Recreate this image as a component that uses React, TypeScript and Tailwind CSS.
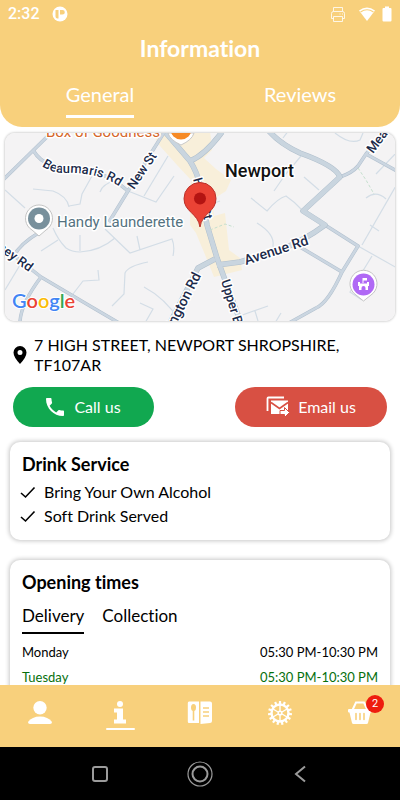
import { useState } from "react";
import type { ReactNode } from "react";

const MAJOR_ROADS = [
  "M166 133 L190 161 Q197 172 200 185 L207 225 L217 258 L225 280 L241 323",
  "M190 161 Q205 155 222 132",
  "M268 130 Q280 144 300 153 Q336 166 340 177 L303 211 L325 225 Q305 240 280 250 L240 262 L217 265",
  "M215 259 L198 268 L170 323",
];

const MID_ROADS = [
  "M3 180 L53 131",
  "M33 150 Q40 162 52 165 L95 172 Q112 177 128 191",
  "M165 131 L153 150 L128 191 L109 222",
  "M3 247 L41 277 L90 306 L119 323",
  "M41 277 Q20 305 20 323",
  "M40 232 Q18 245 13 258",
  "M340 177 Q352 173 358 166 L366 154 L386 131",
  "M366 154 L397 171",
  "M325 225 L358 246 L342 272 Q328 303 316 308 L289 323",
  "M300 247 L342 272",
];

const MINOR_ROADS = [
  "M358 246 L397 268",
  "M33 189 L53 191 Q67 196 69 207 M53 228 Q58 240 66 248 Q72 252 80 252 Q100 251 115 238",
  "M69 206 L80 204 L82 194 L92 176",
  "M128 191 L156 202 L174 176",
  "M144 196 L168 156",
  "M117 180 Q102 184 100 192",
  "M105 229 L130 253 L172 239 Q175 246 173 256",
  "M148 262 Q128 266 125 273 L124 294 L112 306",
  "M98 270 L99 280 L83 281 L73 294",
  "M144 287 Q165 298 180 321",
  "M5 290 L20 265",
  "M80 235 V251",
  "M41 251 L58 240",
  "M5 190 L25 208",
  "M251 198 L267 211 Q278 198 286 196 Q295 202 303 211",
  "M257 223 Q275 234 273 246 L277 255",
  "M301 156 L285 175 L274 191",
  "M304 177 L319 190",
  "M283 138 L292 126",
  "M335 133 Q350 145 360 140 L363 133",
  "M397 184 L362 245",
  "M366 198 Q376 190 386 199",
  "M370 225 L379 231",
  "M397 152 L376 174",
  "M372 256 L350 292 L362 300",
  "M234 318 L268 306 M255 311 L258 321",
  "M275 323 L281 313",
  "M137 236 L140 250",
  "M200 208 L220 201",
  "M140 303 L153 309 L145 323",
];

const OPENING_HOURS = [
  { day: "Monday", hours: "05:30 PM-10:30 PM", today: false },
  { day: "Tuesday", hours: "05:30 PM-10:30 PM", today: true },
];

const GEAR_TEETH = [0, 24, 48, 72, 96, 120, 144, 168, 192, 216, 240, 264, 288, 312, 336];

function Roads({ paths, edge, fill, width }: { paths: string[]; edge: string; fill: string; width: number }) {
  return (
    <g fill="none" strokeLinejoin="round">
      {paths.map((d) => <path key={d} d={d} stroke={edge} strokeWidth={width + 1} />)}
      {paths.map((d) => <path key={d + "f"} d={d} stroke={fill} strokeWidth={width} />)}
    </g>
  );
}

function TownMap() {
  return (
    <svg viewBox="5 133 390 188" preserveAspectRatio="xMidYMid slice" className="block h-[188px] w-full" role="img" aria-label="Map of Newport">
      <rect x="0" y="125" width="400" height="200" fill="#f4f3f4" />
      <path d="M150 130 H210 L212 150 L204 158 L216 169 L231 180 L226 191 L212 200 L214 216 L225 213 L229 250 L240 258 L242 270 L214 277 L208 262 L196 233 L190 225 L191 180 L177 165 L160 146 Z" fill="#f8efda" />
      <g fill="none" stroke="#d3dde6" strokeWidth="1.200">
        {MINOR_ROADS.map((d) => <path key={d} d={d} />)}
      </g>
      <Roads paths={MID_ROADS} edge="#b2c0ce" fill="#cbd6e1" width={2.5} />
      <Roads paths={MAJOR_ROADS} edge="#b0bfcc" fill="#c9d5df" width={4.5} />
      <path d="M210 230 L225 224 L234 227 M358 168 L366 180 L374 194" fill="none" stroke="#c5dfce" strokeDasharray="3 2" />

      <defs>
        <path id="beaumaris" d="M42 166 Q53 174 70 173 Q100 173 120 187" />
        <path id="neyrd" d="M-3 249 L33 275" />
      </defs>
      <g fontFamily="Roboto, sans-serif" fill="#1b2a4a" stroke="#ffffff" strokeWidth="3" strokeLinejoin="round" paintOrder="stroke" fontWeight="500">
        <text fontSize="13"><textPath href="#beaumaris">Beaumaris Rd</textPath></text>
        <text fontSize="13" transform="translate(134 190) rotate(-56)">New St</text>
        <text fontSize="13"><textPath href="#neyrd">ney Rd</textPath></text>
        <text fontSize="14" transform="translate(246 265) rotate(-18)">Avenue Rd</text>
        <text fontSize="13" transform="translate(373 154) rotate(-53)">Meadow</text>
        <text fontSize="13" transform="translate(221 281) rotate(73)">Upper Bar</text>
        <text fontSize="14" transform="translate(171 335) rotate(-63)">llington Rd</text>
        <text fontSize="13" transform="translate(193 179) rotate(75)">High St</text>
        <text x="225" y="177" fontSize="18" fill="#111111">Newport</text>
        <text x="57" y="227" fontSize="15" fill="#54727f" fontWeight="400">Handy Launderette</text>
        <text x="46" y="137" fontSize="15" fill="#d5662a" fontWeight="400">Box of Goodness</text>
      </g>

      <g>
        <path d="M168 133 Q170 140 181 145 Q192 140 194 133 Z" fill="#ffffff" stroke="#c8c8c8" />
        <circle cx="181" cy="129" r="10.500" fill="#f68a26" />
      </g>
      <g>
        <path d="M39 236 L32 230 A13.500 13.500 0 1 1 46 230 Z" fill="#ffffff" stroke="#c4c4c4" />
        <circle cx="39" cy="218.500" r="11" fill="#78909c" />
        <circle cx="39" cy="218.500" r="4.500" fill="#ffffff" />
      </g>
      <g>
        <path d="M363.500 301 L356 295 A13.500 13.500 0 1 1 371 295 Z" fill="#ffffff" stroke="#c4c4c4" />
        <circle cx="363.500" cy="284.500" r="11" fill="#b069f5" />
        <path d="M362.500 278 H367 V280.500 H363.500 V283 H362.500 Z M358 282 H360 V283.500 H367 V282 H369 V286 H368 V290 H365.500 V288 A2 2 0 0 0 361.500 288 V290 H359 V286 H358 Z" fill="#ffffff" />
      </g>
      <path d="M200 227 C198 213 184 212 184 198.500 A16 16 0 0 1 216 198.500 C216 212 202 213 200 227 Z" fill="#ea4335" stroke="#b9312a" />
      <circle cx="200" cy="198.500" r="6" fill="#b31412" />

      <text x="12" y="308" fontFamily="Lato, sans-serif" fontSize="20" fontWeight="600" stroke="#ffffff" strokeWidth="2" paintOrder="stroke">
        <tspan fill="#4285f4">G</tspan><tspan fill="#ea4335">o</tspan><tspan fill="#fbbc05">o</tspan><tspan fill="#4285f4">g</tspan><tspan fill="#34a853">l</tspan><tspan fill="#ea4335">e</tspan>
      </text>
    </svg>
  );
}

function StatusBar() {
  return (
    <div className="flex h-7 items-center px-2 text-white">
      <span className="w-11 font-[Roboto] text-base font-medium">2:32</span>
      <svg width="16" height="16" viewBox="0 0 16 16">
        <circle cx="8" cy="8" r="7.500" fill="#fff" />
        <path d="M3.500 4 H6.500 V12.500 H5.500 Q3.500 12.500 3.500 10.500 Z M8 4 H10.500 A2.300 2.300 0 0 1 10.500 8.600 H8 Z" fill="#f8d07c" />
      </svg>
      <svg className="ml-auto" width="16" height="16" viewBox="0 0 16 16" fill="none" stroke="#fff" strokeOpacity=".8">
        <path d="M3.500 5.500 V1.500 H12.500 V5.500 M3.500 12.500 H1.500 V7.500 Q1.500 5.500 3.500 5.500 H12.500 Q14.500 5.500 14.500 7.500 V12.500 H12.500 M3.500 10.500 H12.500 V15.500 H3.500 Z M9.500 8 H10.500 M12 8 H13" />
      </svg>
      <svg className="ml-3" width="18" height="16" viewBox="0 0 18 16">
        <path d="M1 4.500 Q9 -1.500 17 4.500 L9 15 Z" fill="#fff" />
        <path d="M2.500 6 Q9 1.500 15.500 6" fill="none" stroke="#f8d07c" strokeWidth="1.200" />
      </svg>
      <svg className="ml-1.5" width="10" height="16" viewBox="0 0 10 16">
        <path d="M3 .5 H7 V2 H8.500 Q9.500 2 9.500 3 V14.500 Q9.500 15.500 8.500 15.500 H1.500 Q.5 15.500 .5 14.500 V3 Q.5 2 1.500 2 H3 Z" fill="#fff" />
      </svg>
    </div>
  );
}

function Card({ title, children }: { title: string; children: ReactNode }) {
  return (
    <section className="mx-2.5 rounded-[10px] bg-white px-3 pt-2.5 pb-3 shadow-[0_0_4px_1px_rgba(0,0,0,0.22)]">
      <h2 className="text-lg leading-6 font-bold">{title}</h2>
      {children}
    </section>
  );
}

function Tick({ children }: { children: string }) {
  return (
    <li className="flex items-center gap-2">
      <svg className="-ml-0.5" width="16" height="14" viewBox="0 0 16 14" fill="none" stroke="#000" strokeWidth="1.600">
        <path d="M1 8 L5.500 12 L14.500 2.500" />
      </svg>
      {children}
    </li>
  );
}

function BottomNav() {
  return (
    <nav className="grid h-[62px] shrink-0 grid-cols-5 bg-[#f8d07c]">
      <button aria-label="Account" className="flex flex-col items-center pt-4">
        <svg width="24" height="24" viewBox="0 0 24 24" fill="#fff">
          <circle cx="12" cy="6.700" r="6.700" />
          <path d="M0 21 Q4 15.500 12 15.500 Q20 15.500 24 21 Q24 23 22 23 H2 Q0 23 0 21 Z" />
        </svg>
      </button>
      <button aria-label="Information" className="flex flex-col items-center pt-4">
        <svg width="24" height="24" viewBox="0 0 24 24" fill="#fff">
          <circle cx="12" cy="3" r="3" />
          <path d="M6 7.500 H15 V18.500 H18 V22.500 H6 V18.500 H9 V11.500 H6 Z" />
        </svg>
        <span className="mt-[3px] h-0.5 w-[29px] rounded-full bg-white" />
      </button>
      <button aria-label="Menu" className="flex flex-col items-center pt-4">
        <svg width="26" height="24" viewBox="0 0 26 24">
          <path d="M2 .5 H12 V22 H2 Q.8 22 .8 20.500 V2 Q.8 .5 2 .5 Z M13.500 .5 H23 Q25 .5 25 2.500 V20 Q25 22 23 22 L13.500 23 Z" fill="#fff" />
          <ellipse cx="6.500" cy="6.500" rx="2.500" ry="3.500" fill="#f8d07c" />
          <path d="M6.500 9 V19.500 M16 7 H22 M16 11 H22 M16 15 H22" stroke="#f8d07c" strokeWidth="1.600" />
        </svg>
      </button>
      <button aria-label="Settings" className="flex flex-col items-center pt-4">
        <svg width="24" height="24" viewBox="0 0 24 24" fill="none" stroke="#fff">
          {GEAR_TEETH.map((angle) => (
            <path key={angle} d="M12 0 V4" strokeWidth="2.200" transform={`rotate(${angle} 12 12)`} />
          ))}
          <circle cx="12" cy="12" r="8.500" strokeWidth="2.400" />
          <circle cx="12" cy="12" r="1.800" strokeWidth="1.600" />
          <path d="M12 4 V10 M12 14 V20 M5 8 L10 11 M14 13 L19 16 M5 16 L10 13 M14 11 L19 8" strokeWidth="1.400" />
        </svg>
      </button>
      <button aria-label="Basket, 2 items" className="flex flex-col items-center pt-4">
        <span className="relative">
          <svg width="24" height="24" viewBox="0 0 24 24">
            <path d="M4.500 9 L8 1.500 H16 L19.500 9" fill="none" stroke="#fff" strokeWidth="2" />
            <path d="M1 8 H23 Q24 8 24 9 V10.500 Q24 11.500 23 11.500 H22.500 L20 22 Q19.700 23 18.500 23 H5.500 Q4.300 23 4 22 L1.500 11.500 H1 Q0 11.500 0 10.500 V9 Q0 8 1 8 Z" fill="#fff" />
            <path d="M8 12.500 V18.500 M12 12.500 V18.500 M16 12.500 V18.500" stroke="#f8d07c" strokeWidth="1.600" strokeLinecap="round" />
          </svg>
          <span className="absolute -top-1.5 -right-3 flex size-[18px] items-center justify-center rounded-full bg-[#ee1c0e] font-[Roboto] text-[11px] leading-3 text-white">2</span>
        </span>
      </button>
    </nav>
  );
}

function SystemNav() {
  return (
    <div className="grid h-[53px] shrink-0 grid-cols-[1fr_100px_100px_100px_1fr] place-items-center bg-black text-[#9b9b9b]">
      <button aria-label="Recent apps" className="col-start-2">
        <svg width="16" height="16" viewBox="0 0 16 16" fill="none" stroke="currentColor" strokeWidth="2">
          <rect x="1" y="1" width="14" height="14" rx="2" />
        </svg>
      </button>
      <button aria-label="Home">
        <svg width="26" height="26" viewBox="0 0 26 26" fill="none" stroke="currentColor">
          <circle cx="13" cy="13" r="12" strokeWidth="1.200" />
          <circle cx="13" cy="13" r="7.500" strokeWidth="2" />
        </svg>
      </button>
      <button aria-label="Back">
        <svg width="12" height="18" viewBox="0 0 12 18" fill="none" stroke="currentColor" strokeWidth="2">
          <path d="M11 1.500 L2 9 L11 16.500" />
        </svg>
      </button>
    </div>
  );
}

export default function App() {
  const [tab, setTab] = useState("General");
  const [service, setService] = useState("Delivery");

  return (
    <div className="flex h-screen flex-col overflow-hidden bg-white font-[Lato,sans-serif] text-black [font-variant-ligatures:none]">
      <header className="shrink-0 rounded-b-[22px] bg-[#f8d07c] pb-[9px] text-white">
        <StatusBar />
        <h1 className="pt-1 text-center text-[23px] leading-8 font-bold">Information</h1>
        <div className="grid grid-cols-2 justify-items-center pt-[18px] text-xl">
          {["General", "Reviews"].map((name) => (
            <button
              key={name}
              onClick={() => setTab(name)}
              className={`border-b-3 pb-[9px] leading-6 ${tab === name ? "border-white" : "border-transparent"}`}
            >
              {name}
            </button>
          ))}
        </div>
      </header>

      <main className="min-h-0 flex-1 overflow-hidden">
        <div className="mx-[5px] mt-1.5 overflow-hidden rounded-[10px] shadow-[0_0_2px_1px_rgba(0,0,0,0.15)]">
          <TownMap />
        </div>

        <div className="flex items-center px-3 pt-3.5">
          <svg className="shrink-0" width="16" height="20" viewBox="0 0 16 20">
            <path d="M8 1 A6.500 6.500 0 0 1 14.500 7.500 Q14.500 12 8 19 Q1.500 12 1.500 7.500 A6.500 6.500 0 0 1 8 1 Z M8 5 A2.500 2.500 0 1 0 8 10 A2.500 2.500 0 1 0 8 5 Z" fillRule="evenodd" />
          </svg>
          <address className="ml-1.5 text-base leading-5 not-italic">7 HIGH STREET, NEWPORT SHROPSHIRE, TF107AR</address>
        </div>

        <div className="flex justify-between px-[13px] pt-3">
          <button className="flex h-10 w-[141px] items-center justify-center gap-2.5 rounded-full bg-[#11a850] text-base text-white">
            <svg width="18" height="18" viewBox="3 3 18 18" fill="currentColor">
              <path d="M6.620 10.790c1.440 2.830 3.760 5.140 6.590 6.590l2.200-2.200c.27-.27.67-.36 1.020-.24 1.120.37 2.330.57 3.570.57.55 0 1 .45 1 1V20c0 .55-.45 1-1 1-9.390 0-17-7.610-17-17 0-.55.45-1 1-1h3.500c.55 0 1 .45 1 1 0 1.250.2 2.450.57 3.570.11.35.03.74-.25 1.020l-2.200 2.200z" />
            </svg>
            Call us
          </button>
          <button className="flex h-10 w-[152px] items-center justify-center gap-2 rounded-full bg-[#d85043] text-base text-white">
            <svg width="24" height="22" viewBox="0 0 24 22">
              <path d="M1.500 15 V2.500 Q1.500 1.500 2.500 1.500 H18" fill="none" stroke="#fff" strokeWidth="1.800" />
              <path d="M5 4.500 H22 V18 H5 Z" fill="#fff" />
              <path d="M5 6.500 L13.500 12.500 L22 6.500" fill="none" stroke="#d85043" strokeWidth="1.600" />
              <path d="M14 14.500 H18.500 V11.500 L23.500 16.500 L18.500 21.500 V18.500 H14 Z" fill="#fff" stroke="#d85043" />
            </svg>
            Email us
          </button>
        </div>

        <div className="flex flex-col gap-5 pt-[15px]">
          <Card title="Drink Service">
            <ul className="pt-1 text-base leading-6">
              <Tick>Bring Your Own Alcohol</Tick>
              <Tick>Soft Drink Served</Tick>
            </ul>
          </Card>

          <Card title="Opening times">
            <div className="flex gap-[18px] pt-2.5 text-[17px] leading-6">
              {["Delivery", "Collection"].map((name) => (
                <button
                  key={name}
                  onClick={() => setService(name)}
                  className={`border-b-2 pb-1 ${service === name ? "border-black" : "border-transparent"}`}
                >
                  {name}
                </button>
              ))}
            </div>
            <table className="mt-1.5 w-full text-[13px] leading-[25px]">
              <tbody>
                {OPENING_HOURS.map(({ day, hours, today }) => (
                  <tr key={day} className={today ? "text-[#06700d]" : ""}>
                    <th scope="row" className="text-left font-normal">{day}</th>
                    <td className="text-right">{hours}</td>
                  </tr>
                ))}
              </tbody>
            </table>
          </Card>
        </div>
      </main>

      <BottomNav />
      <SystemNav />
    </div>
  );
}
